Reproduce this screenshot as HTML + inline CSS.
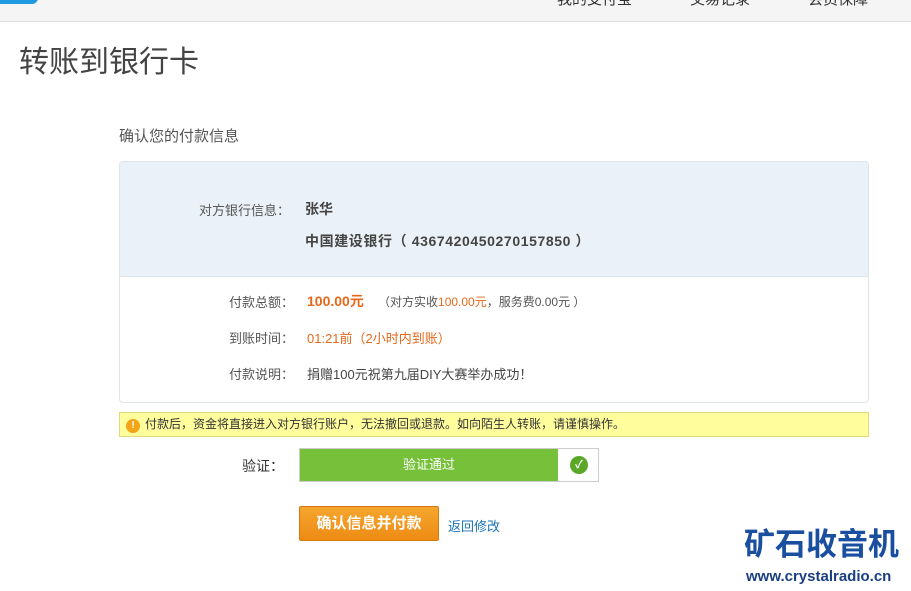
<!DOCTYPE html>
<html><head><meta charset="utf-8"><style>
*{margin:0;padding:0;box-sizing:border-box}
body{width:911px;height:591px;background:#fff;font-family:"Liberation Sans","Noto Sans CJK SC",sans-serif;color:#333;position:relative;overflow:hidden;font-size:13px}
.hdr{position:absolute;left:0;top:0;width:911px;height:22px;background:#f5f5f5;border-bottom:1px solid #ddd}
.hdr .logo{position:absolute;left:0;top:-10px;width:38px;height:14px;background:#1e9be0;border-radius:0 0 6px 0}
.hdr span{position:absolute;top:-12px;font-size:15px;color:#333}
.a{position:absolute;white-space:nowrap}
h1{position:absolute;left:19px;top:37px;font-size:30px;font-weight:normal;color:#444}
.box{position:absolute;left:119px;top:161px;width:750px;height:242px;border:1px solid #dde4ea;border-radius:4px;overflow:hidden}
.top{height:115px;background:#ebf1f8;border-bottom:1px solid #dde4ea}
.warn{position:absolute;left:119px;top:412px;width:750px;height:25px;background:#fffd9c;border:1px solid #e2d77a;font-size:12px;line-height:23px;padding-left:25px}
.warn i{position:absolute;left:6px;top:6px;width:14px;height:14px;border-radius:50%;background:#f2a516;color:#fff;font-size:10px;line-height:14px;text-align:center;font-style:normal;font-weight:bold}
.ver{position:absolute;left:299px;top:448px;width:300px;height:34px;border:1px solid #ccc}
.ver .g{position:absolute;left:0;top:0;width:258px;height:32px;background:#77c13a;color:#fff;text-align:center;line-height:32px;font-size:13px}
.ver .c{position:absolute;left:270px;top:7px;width:18px;height:18px;border-radius:50%;background:#5ba828;color:#fff;font-size:11px;text-align:center;line-height:18px;font-weight:bold}
.btn{position:absolute;left:299px;top:506px;width:140px;height:35px;background:linear-gradient(#f5a62e,#ee8b14);border:1px solid #d67a10;border-radius:2px;color:#fff;font-weight:bold;font-size:15px;text-align:center;line-height:33px}
.o{color:#e7681b}
</style></head><body>
<div class="hdr"><div class="logo"></div><span style="left:557px">我的支付宝</span><span style="left:690px">交易记录</span><span style="left:808px">会员保障</span></div>
<h1>转账到银行卡</h1>
<div class="a" style="left:119px;top:125px;font-size:15px;color:#555">确认您的付款信息</div>
<div class="box"><div class="top"></div></div>
<div class="a" style="left:199px;top:200px;color:#555">对方银行信息：</div>
<div class="a" style="left:305px;top:199px;font-weight:bold;font-size:14px;color:#444">张华</div>
<div class="a" style="left:305px;top:231px;font-weight:bold;font-size:14px;color:#444;letter-spacing:0.6px">中国建设银行（ 4367420450270157850 ）</div>
<div class="a" style="left:229px;top:292px;color:#555">付款总额：</div>
<div class="a" style="left:307px;top:291px;font-size:14px;font-weight:bold" ><span class="o">100.00元</span></div>
<div class="a" style="left:378px;top:293px;font-size:12px;color:#555">（对方实收<span class="o">100.00元</span>，服务费0.00元 ）</div>
<div class="a" style="left:229px;top:328px;color:#555">到账时间：</div>
<div class="a o" style="left:307px;top:328px">01:21前（2小时内到账）</div>
<div class="a" style="left:229px;top:364px;color:#555">付款说明：</div>
<div class="a" style="left:307px;top:364px;color:#444">捐赠100元祝第九届DIY大赛举办成功！</div>
<div class="warn"><i>!</i>付款后，资金将直接进入对方银行账户，无法撤回或退款。如向陌生人转账，请谨慎操作。</div>
<div class="a" style="left:242px;top:456px;font-size:14px">验证：</div>
<div class="ver"><div class="g">验证通过</div><div class="c">✓</div></div>
<div class="btn">确认信息并付款</div>
<div class="a" style="left:448px;top:516px;color:#1a73b8">返回修改</div>
<div class="a" style="left:744px;top:528px;font-size:31px;font-weight:bold;color:#1a4fa0;line-height:34px">矿石收音机</div>
<div class="a" style="left:746px;top:568px;font-size:15px;font-weight:bold;color:#1a3f80">www.crystalradio.cn</div>
</body></html>
